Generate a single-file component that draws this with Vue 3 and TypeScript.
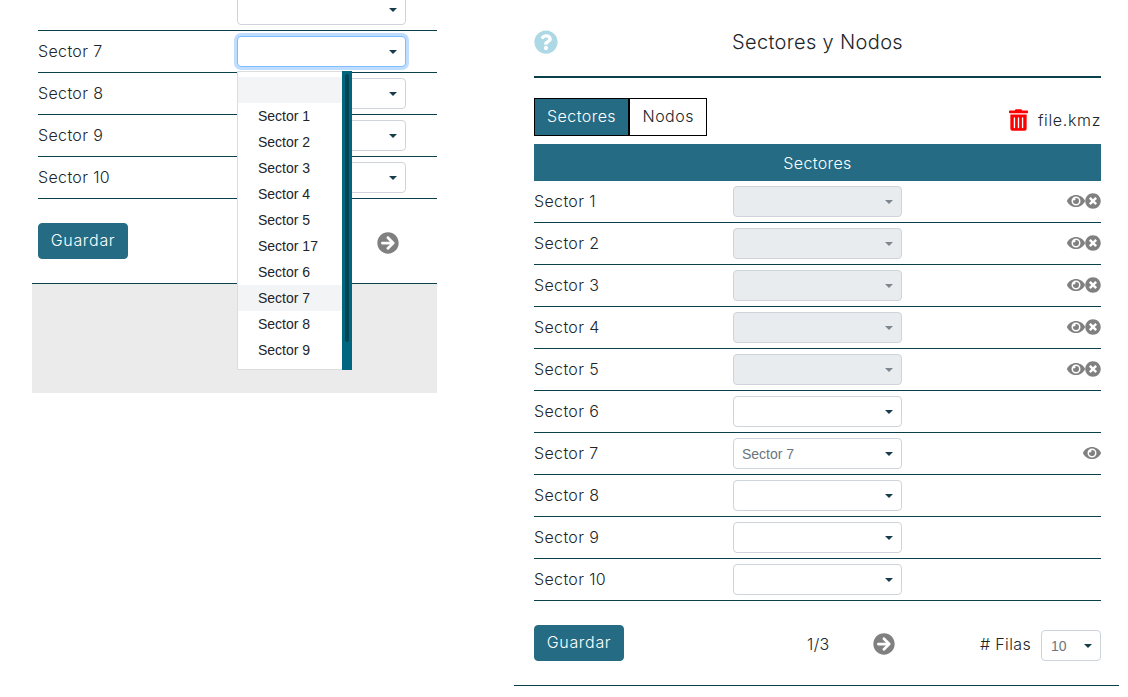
<script setup lang="ts">
interface Row {
  name: string;
  disabled?: boolean;
  value?: string;
  icons?: 'both' | 'eye';
}

const leftRows: Row[] = [
  { name: '' },
  { name: 'Sector 7' },
  { name: 'Sector 8' },
  { name: 'Sector 9' },
  { name: 'Sector 10' },
];

const rows: Row[] = [
  { name: 'Sector 1', disabled: true, icons: 'both' },
  { name: 'Sector 2', disabled: true, icons: 'both' },
  { name: 'Sector 3', disabled: true, icons: 'both' },
  { name: 'Sector 4', disabled: true, icons: 'both' },
  { name: 'Sector 5', disabled: true, icons: 'both' },
  { name: 'Sector 6' },
  { name: 'Sector 7', value: 'Sector 7', icons: 'eye' },
  { name: 'Sector 8' },
  { name: 'Sector 9' },
  { name: 'Sector 10' },
];

const options = ['', 'Sector 1', 'Sector 2', 'Sector 3', 'Sector 4', 'Sector 5', 'Sector 17', 'Sector 6', 'Sector 7', 'Sector 8', 'Sector 9'];

const arrowPath = 'M256 8c137 0 248 111 248 248S393 504 256 504 8 393 8 256 119 8 256 8zm-28.9 143.6l75.5 72.4H120c-13.3 0-24 10.7-24 24v16c0 13.3 10.7 24 24 24h182.6l-75.5 72.4c-9.7 9.3-9.9 24.8-.4 34.3l11 10.9c9.4 9.4 24.6 9.4 33.9 0L404.3 273c9.4-9.4 9.4-24.6 0-33.9L271.6 106.3c-9.4-9.4-24.6-9.4-33.9 0l-11 10.9c-9.3 9.6-9.1 25.1.4 34.4z';
const eyePath = 'M572.52 241.4C518.29 135.59 410.93 64 288 64S57.68 135.64 3.48 241.41a32.35 32.35 0 0 0 0 29.19C57.71 376.41 165.07 448 288 448s230.32-71.64 284.52-177.41a32.35 32.35 0 0 0 0-29.19zM288 400a144 144 0 1 1 144-144 143.93 143.93 0 0 1-144 144zm0-240a95.31 95.31 0 0 0-25.31 3.79 47.85 47.85 0 0 1-66.9 66.9A95.78 95.78 0 1 0 288 160z';
const closePath = 'M256 8C119 8 8 119 8 256s111 248 248 248 248-111 248-248S393 8 256 8zm121.6 313.1c4.7 4.7 4.7 12.3 0 17L338 377.6c-4.7 4.7-12.3 4.7-17 0L256 312l-65.1 65.6c-4.7 4.7-12.3 4.7-17 0L134.4 338c-4.7-4.7-4.7-12.3 0-17l65.6-65-65.6-65.1c-4.7-4.7-4.7-12.3 0-17l39.6-39.6c4.7-4.7 12.3-4.7 17 0l65 65.7 65.1-65.6c4.7-4.7 12.3-4.7 17 0l39.6 39.6c4.7 4.7 4.7 12.3 0 17L312 256l65.6 65.1z';
const helpPath = 'M504 256c0 136.997-111.043 248-248 248S8 392.997 8 256C8 119.083 119.043 8 256 8s248 111.083 248 248zM262.655 90c-54.497 0-89.255 22.957-116.549 63.758-3.536 5.286-2.353 12.415 2.715 16.258l34.699 26.31c5.205 3.947 12.621 3.008 16.665-2.122 17.864-22.658 30.113-35.797 57.303-35.797 20.429 0 45.698 13.148 45.698 32.958 0 14.976-12.363 22.667-32.534 33.976C247.128 238.528 216 254.941 216 296v4c0 6.627 5.373 12 12 12h56c6.627 0 12-5.373 12-12v-1.333c0-28.462 83.186-29.647 83.186-106.667 0-58.002-60.165-102-116.531-102zM256 338c-25.365 0-46 20.635-46 46 0 25.364 20.635 46 46 46s46-20.636 46-46c0-25.365-20.635-46-46-46z';
const trashPath = 'M32 464a48 48 0 0 0 48 48h288a48 48 0 0 0 48-48V128H32zm272-256a16 16 0 0 1 32 0v224a16 16 0 0 1-32 0zm-96 0a16 16 0 0 1 32 0v224a16 16 0 0 1-32 0zm-96 0a16 16 0 0 1 32 0v224a16 16 0 0 1-32 0zM432 32H312l-9.4-18.7A24 24 0 0 0 281.1 0H166.8a23.72 23.72 0 0 0-21.4 13.3L136 32H16A16 16 0 0 0 0 48v32a16 16 0 0 0 16 16h416a16 16 0 0 0 16-16V48a16 16 0 0 0-16-16z';
</script>

<template>
  <div class="page">
    <section class="left">
      <div class="left-body">
        <div v-for="(row, i) in leftRows" :key="i" class="row">
          <span class="row-name">{{ row.name }}</span>
          <div class="select" :class="{ focused: row.name === 'Sector 7' }">
            <span class="caret"></span>
          </div>
        </div>
        <div class="left-foot">
          <button class="save">Guardar</button>
          <svg class="arrow" viewBox="0 0 512 512"><path :d="arrowPath" /></svg>
        </div>
        <div class="menu">
          <ul class="menu-list">
            <li v-for="(opt, i) in options" :key="i" :class="{ hot: i === 0 || opt === 'Sector 7' }">{{ opt }}</li>
          </ul>
          <div class="menu-track"><div class="menu-thumb"></div></div>
        </div>
      </div>
      <div class="left-grey"></div>
    </section>

    <section class="right">
      <div class="inner">
        <header class="head">
          <svg class="help" viewBox="0 0 512 512"><path :d="helpPath" /></svg>
          <h1>Sectores y Nodos</h1>
        </header>
        <div class="tools">
          <div class="tabs">
            <button class="tab active">Sectores</button>
            <button class="tab">Nodos</button>
          </div>
          <div class="file">
            <svg class="trash" viewBox="0 0 448 512"><path :d="trashPath" /></svg>
            <span>file.kmz</span>
          </div>
        </div>
        <div class="band">Sectores</div>
        <div v-for="row in rows" :key="row.name" class="row">
          <span class="row-name">{{ row.name }}</span>
          <div class="select" :class="{ off: row.disabled }">
            <span class="select-value">{{ row.value }}</span>
            <span class="caret"></span>
          </div>
          <div class="row-icons">
            <svg v-if="row.icons" class="eye" viewBox="0 0 576 512"><path :d="eyePath" /></svg>
            <svg v-if="row.icons === 'both'" class="close" viewBox="0 0 512 512"><path :d="closePath" /></svg>
          </div>
        </div>
        <footer class="foot">
          <button class="save">Guardar</button>
          <span class="pager">1/3</span>
          <svg class="arrow" viewBox="0 0 512 512"><path :d="arrowPath" /></svg>
          <div class="per-page">
            <span class="per-page-label"># Filas</span>
            <div class="select small">
              <span class="select-value">10</span>
              <span class="caret"></span>
            </div>
          </div>
        </footer>
      </div>
      <div class="end-line"></div>
    </section>
  </div>
</template>

<style>
html, body {
  overflow: hidden;
  background: #fff;
}
</style>

<style scoped>
.page {
  display: flex;
  align-items: flex-start;
  width: 1128px;
  height: 697px;
  overflow: hidden;
  font-family: Inter, "Liberation Sans", sans-serif;
  font-size: 16px;
  font-weight: 300;
  letter-spacing: 0.35px;
  color: #212529;
}

.left {
  width: 405px;
  margin-left: 32px;
  margin-top: -11px;
}

.left-body {
  position: relative;
  padding-left: 6px;
  border-bottom: 1px solid #0a3f4c;
}

.left-foot {
  display: flex;
  align-items: center;
  height: 84px;
}

.left-foot .arrow {
  margin-left: 249px;
  margin-top: 4px;
}

.left-grey {
  height: 109px;
  background: #ebebeb;
}

.menu {
  position: absolute;
  top: 82px;
  left: 205px;
  display: flex;
  width: 115px;
  height: 299px;
  background: #fff;
  border: 1px solid #dcdcdc;
  border-right: 0;
  box-sizing: border-box;
  font-family: "Liberation Sans", sans-serif;
  font-size: 14px;
  font-weight: 400;
  letter-spacing: 0;
}

.menu-list {
  flex: 1;
  margin: 0;
  padding: 5px 0 0;
  list-style: none;
}

.menu-list li {
  height: 26px;
  line-height: 26px;
  padding-left: 20px;
}

.menu-list li.hot {
  background: #f3f4f5;
}

.menu-track {
  width: 10px;
  margin: -1px 0;
  padding: 3px 3px 0;
  box-sizing: border-box;
  background: #00667f;
}

.menu-thumb {
  height: 268px;
  border-radius: 2px;
  background: #034553;
}

.right {
  width: 605px;
  margin-left: 77px;
}

.inner {
  padding: 0 18px 0 20px;
}

.head {
  position: relative;
  display: flex;
  align-items: center;
  justify-content: center;
  height: 78px;
  box-sizing: border-box;
  border-bottom: 2px solid #0a3f4c;
}

.head h1 {
  margin: 0;
  padding-top: 8px;
  font-size: 20px;
  font-weight: 300;
  line-height: 24px;
}

.help {
  position: absolute;
  left: 0;
  top: 30px;
  width: 24px;
  height: 24px;
  fill: #add8e6;
}

.tools {
  display: flex;
  justify-content: space-between;
  align-items: flex-start;
  height: 66px;
  padding-top: 20px;
  box-sizing: border-box;
}

.tabs {
  display: flex;
}

.tab {
  height: 38px;
  padding: 0 12.5px 2px;
  background: #fff;
  border: 1px solid #000;
  border-radius: 0;
  font: inherit;
  letter-spacing: 0.45px;
  color: #212529;
}

.tab.active {
  background: #246b83;
  color: #fff;
  padding: 0 12px 2px;
}

.file {
  display: flex;
  align-items: center;
  gap: 10px;
  margin-top: 11px;
  letter-spacing: 0.65px;
}

.trash {
  width: 19px;
  height: 22px;
  fill: #f00;
}

.band {
  height: 37px;
  padding-top: 1px;
  box-sizing: border-box;
  line-height: 37px;
  text-align: center;
  background: #246b83;
  color: #fff;
}

.row {
  display: flex;
  align-items: center;
  height: 42px;
  box-sizing: border-box;
  border-bottom: 1px solid #0a3f4c;
}

.row-name {
  width: 199px;
  flex: none;
  padding-bottom: 2px;
}

.select {
  position: relative;
  flex: none;
  display: flex;
  align-items: center;
  justify-content: space-between;
  width: 169px;
  height: 31px;
  padding: 0 9px 0 8px;
  box-sizing: border-box;
  background: #fff;
  border: 1px solid #ced4da;
  border-radius: 4px;
  font-family: "Liberation Sans", sans-serif;
  font-size: 14px;
  font-weight: 400;
  letter-spacing: 0;
  color: #6c757d;
}

.select.focused {
  border-color: #80bdff;
  box-shadow: 0 0 0 3px #bfdeff;
}

.select.off {
  background: #e9ecef;
}

.select.off .caret {
  border-top-color: #7e8790;
}

.caret {
  width: 0;
  height: 0;
  margin-left: auto;
  margin-right: -1px;
  border-left: 4px solid transparent;
  border-right: 4px solid transparent;
  border-top: 4px solid #163d49;
}

.row-icons {
  flex: 1;
  display: flex;
  justify-content: flex-end;
  align-items: center;
  padding-bottom: 2px;
  fill: #808080;
}

.eye {
  width: 18px;
  height: 16px;
}

.close {
  width: 16px;
  height: 16px;
}

.save {
  width: 90px;
  height: 36px;
  padding: 0 0 2px;
  background: #246b83;
  border: 1px solid #246b83;
  border-radius: 4px;
  font: inherit;
  letter-spacing: 0.7px;
  color: #fff;
}

.arrow {
  width: 22px;
  height: 22px;
  fill: #808080;
}

.foot {
  display: flex;
  align-items: flex-start;
  height: 84px;
}

.foot .save {
  margin-top: 24px;
}

.pager {
  margin-left: 183px;
  margin-top: 33px;
}

.foot .arrow {
  margin-left: 43px;
  margin-top: 32px;
}

.per-page {
  margin-left: auto;
  margin-top: 29px;
  display: flex;
  align-items: center;
  gap: 10px;
}

.per-page-label {
  padding-bottom: 4px;
}

.select.small {
  width: 60px;
  padding-left: 9px;
}

.end-line {
  height: 1px;
  background: #0a3f4c;
}
</style>
